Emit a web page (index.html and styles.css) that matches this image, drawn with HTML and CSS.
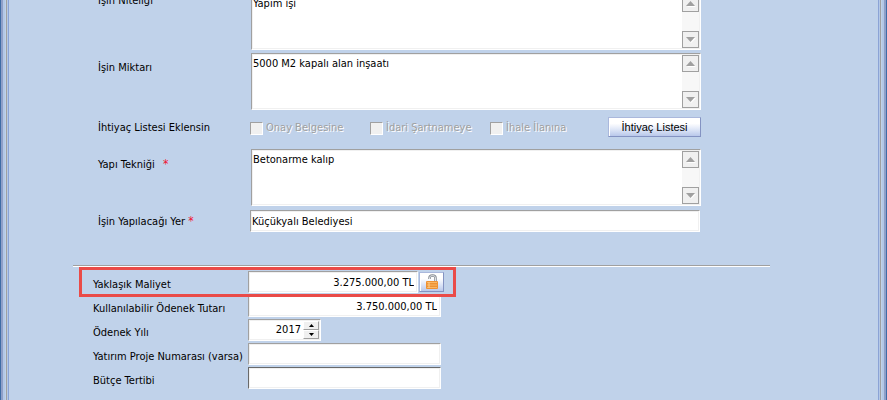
FILE: index.html
```html
<!DOCTYPE html>
<html lang="tr">
<head>
    <meta charset="UTF-8">
    <meta name="viewport" content="width=device-width, initial-scale=1.0">
    <title>Yaklaşık Maliyet</title>
    <link rel="stylesheet" href="styles.css">
</head>
<body>
    <form class="window">
        <div class="edge edge-left"></div>
        <main class="content">
            <section class="details">
                <div class="row row-memo">
                    <label class="label label-high" for="nitelik">İşin Niteliği</label>
                    <div class="memo">
                        <textarea id="nitelik" name="nitelik">Yapım işi</textarea>
                        <div class="scrollbar">
                            <button type="button" class="scroll-btn" aria-label="Yukarı"><svg width="10" height="6"><path d="M1 6L5 2L10 6Z" fill="#fff"/><path d="M0 5L4.500 0L9 5Z" fill="#a0a0a0"/></svg></button>
                            <button type="button" class="scroll-btn" aria-label="Aşağı"><svg width="10" height="6"><path d="M1 1H10L5 6Z" fill="#fff"/><path d="M0 0H9L4.500 5Z" fill="#a0a0a0"/></svg></button>
                        </div>
                    </div>
                </div>
                <div class="row row-memo">
                    <label class="label" for="miktar">İşin Miktarı</label>
                    <div class="memo">
                        <textarea id="miktar" name="miktar">5000 M2 kapalı alan inşaatı</textarea>
                        <div class="scrollbar">
                            <button type="button" class="scroll-btn" aria-label="Yukarı"><svg width="10" height="6"><path d="M1 6L5 2L10 6Z" fill="#fff"/><path d="M0 5L4.500 0L9 5Z" fill="#a0a0a0"/></svg></button>
                            <button type="button" class="scroll-btn" aria-label="Aşağı"><svg width="10" height="6"><path d="M1 1H10L5 6Z" fill="#fff"/><path d="M0 0H9L4.500 5Z" fill="#a0a0a0"/></svg></button>
                        </div>
                    </div>
                </div>
                <div class="row row-checks">
                    <span class="label">İhtiyaç Listesi Eklensin</span>
                    <div class="checks">
                        <label class="check"><input type="checkbox" name="onay" disabled>Onay Belgesine</label>
                        <label class="check"><input type="checkbox" name="idari" disabled>İdari Şartnameye</label>
                        <label class="check"><input type="checkbox" name="ihale" disabled>İhale İlanına</label>
                        <button type="button" class="btn btn-list">İhtiyaç Listesi</button>
                    </div>
                </div>
                <div class="row row-memo">
                    <label class="label" for="teknik">Yapı Tekniği <span class="required required-far">*</span></label>
                    <div class="memo">
                        <textarea id="teknik" name="teknik">Betonarme kalıp</textarea>
                        <div class="scrollbar">
                            <button type="button" class="scroll-btn" aria-label="Yukarı"><svg width="10" height="6"><path d="M1 6L5 2L10 6Z" fill="#fff"/><path d="M0 5L4.500 0L9 5Z" fill="#a0a0a0"/></svg></button>
                            <button type="button" class="scroll-btn" aria-label="Aşağı"><svg width="10" height="6"><path d="M1 1H10L5 6Z" fill="#fff"/><path d="M0 0H9L4.500 5Z" fill="#a0a0a0"/></svg></button>
                        </div>
                    </div>
                </div>
                <div class="row row-place">
                    <label class="label" for="yer">İşin Yapılacağı Yer <span class="required">*</span></label>
                    <input class="field" type="text" id="yer" name="yer" value="Küçükyalı Belediyesi">
                </div>
            </section>

            <hr class="divider">

            <section class="budget">
                <div class="line line-marked">
                    <label class="label" for="maliyet">Yaklaşık Maliyet</label>
                    <input class="field field-cost" type="text" id="maliyet" name="maliyet" value="3.275.000,00 TL">
                    <button type="button" class="btn btn-lock" aria-label="Kilidi aç">
                        <svg width="14" height="16" viewBox="0 0 14 16">
                            <path d="M4.500 5V4Q4.500 1.500 7.500 1.500Q10.500 1.500 10.500 4V8" fill="none" stroke="#858a92" stroke-width="2.500"/>
                            <path d="M4.500 5V4Q4.500 1.500 7.500 1.500Q10.500 1.500 10.500 4V8" fill="none" stroke="#e0e3e6" stroke-width="1"/>
                            <rect x="1" y="7" width="12" height="8" rx="1" fill="#ee9233"/>
                            <path d="M2 8.500H12M2 11H12M2 13.500H12" stroke="#f9b765"/>
                            <path d="M4 8V14" stroke="#fccf90"/>
                        </svg>
                    </button>
                </div>
                <div class="line">
                    <label class="label" for="odenek">Kullanılabilir Ödenek Tutarı</label>
                    <input class="field field-amount" type="text" id="odenek" name="odenek" value="3.750.000,00 TL">
                </div>
                <div class="line">
                    <label class="label" for="yil">Ödenek Yılı</label>
                    <div class="spinner">
                        <input type="text" id="yil" name="yil" value="2017">
                        <div class="spin-buttons">
                            <button type="button" aria-label="Artır"><svg width="5" height="3"><path d="M0 3L2.500 0L5 3Z"/></svg></button>
                            <button type="button" aria-label="Azalt"><svg width="5" height="3"><path d="M0 0H5L2.500 3Z"/></svg></button>
                        </div>
                    </div>
                </div>
                <div class="line">
                    <label class="label" for="proje">Yatırım Proje Numarası (varsa)</label>
                    <input class="field" type="text" id="proje" name="proje">
                </div>
                <div class="line">
                    <label class="label" for="butce">Bütçe Tertibi</label>
                    <input class="field field-active" type="text" id="butce" name="butce">
                </div>
            </section>
        </main>
        <div class="edge edge-right"></div>
    </form>
</body>
</html>
```
FILE: styles.css
```css
* {
    box-sizing: border-box;
}
body {
    margin: 0;
    background: #c0d2ea;
    color: #000;
    font-family: Tahoma, "DejaVu Sans Condensed", sans-serif;
    font-size: 11px;
    line-height: 14px;
    overflow: hidden;
}
input, textarea, button {
    font: inherit;
    color: inherit;
    margin: 0;
}
.window {
    display: flex;
    min-height: 100vh;
}
.edge {
    flex: none;
    width: 9px;
}
.edge-left {
    background: linear-gradient(90deg, #3f6ca6 1px, #8f9fc8 1px 3px, #b4c8e6 3px 5px, #c0d2ea 5px 6px, #a0a0a0 6px 7px, #b4c8e6 7px 8px, #8ba3d6 8px);
}
.edge-right {
    background: linear-gradient(270deg, #3f6ca6 1px, #8f9fc8 1px 3px, #b4c8e6 3px 5px, #c0d2ea 5px 6px, #a0a0a0 6px 7px, #b4c8e6 7px 8px, #8ba3d6 8px);
}
.content {
    flex: 1;
    min-width: 0;
    padding: 0 108px 11px 64px;
}

/* upper part is scrolled a few pixels out of view */
.details {
    margin-top: -7px;
    padding-left: 25px;
}
.row {
    display: flex;
    max-width: 603px;
}
.label {
    white-space: nowrap;
}
.row .label {
    flex: none;
    width: 152px;
}
.row-memo {
    margin-bottom: 3px;
}
.row-memo .label {
    width: 153px;
    padding-top: 8px;
}
.row-memo .label-high {
    padding-top: 1px;
}
.required {
    color: #f01030;
    font-size: 12px;
}
.required-far {
    margin-left: 5px;
}
.memo, .field, .spinner {
    border: 1px solid;
    border-color: #a0a0a0 #fff #fff #a0a0a0;
    background: #fff;
    box-shadow: inset -1px -1px #f0f0f0, inset 1px 1px #f0f0f0;
}
.memo {
    display: flex;
    flex: 1;
    height: 57px;
    padding: 1px;
}
.memo textarea {
    flex: 1;
    min-width: 0;
    padding: 2px 0;
    border: 0;
    background: none;
    resize: none;
    overflow: hidden;
    outline: none;
}
.scrollbar {
    display: flex;
    flex-direction: column;
    justify-content: space-between;
    width: 17px;
    background: #f7f7f7;
}
.scroll-btn {
    display: flex;
    align-items: center;
    justify-content: center;
    height: 17px;
    padding: 0;
    border: 1px solid #a0a0a0;
    background: #f0f0f0;
}
.row-checks {
    align-items: center;
    height: 20px;
    margin: 7px 0 12px;
}
.row-checks .label {
    padding-top: 2px;
}
.checks {
    display: flex;
    flex: 1;
    align-items: center;
}
.check {
    display: flex;
    flex: none;
    align-items: center;
    gap: 3px;
    width: 120px;
    padding-top: 2px;
    color: #a0a0a0;
    text-shadow: 1px 1px #fff;
}
.check:nth-child(3) {
    width: auto;
}
.check input {
    appearance: none;
    width: 13px;
    height: 13px;
    border: 1px solid;
    border-color: #a0a0a0 #fff #fff #a0a0a0;
    background: #f0f0f0;
}
.btn {
    padding: 0;
    border: 1px solid;
    border-color: #aab8dc #8493c2 #8493c2 #aab8dc;
    background: linear-gradient(#fff 30%, #e2e9f8 60%, #b9c8ea);
    box-shadow: inset 1px 1px #fff;
}
.btn-list {
    width: 93px;
    height: 20px;
    margin-left: auto;
    font-family: "Liberation Sans", Arial, sans-serif;
}
.row-place {
    align-items: center;
    margin-top: 4px;
    padding-right: 1px;
}
.field {
    flex: 1;
    min-width: 0;
    height: 22px;
    padding: 0 1px;
    outline: none;
}
.divider {
    margin: 33px 0 4px;
    border: 0;
    border-top: 1px solid #a0a0a0;
    border-bottom: 1px solid #fff;
}

.budget {
    display: flex;
    flex-direction: column;
    gap: 2px;
    max-width: 368px;
    padding-left: 20px;
}
.line {
    display: flex;
    height: 22px;
}
.line .label {
    flex: none;
    width: 155px;
    padding-top: 7px;
}
/* red frame around the cost line, drawn over its neighbours */
.line-marked {
    position: relative;
}
.line-marked::after {
    content: "";
    position: absolute;
    inset: -4px -15px -4px -14px;
    border: 3px solid #ea4b48;
    pointer-events: none;
}
.field-cost, .field-amount, .spinner input {
    text-align: right;
}
.field-cost, .field-amount {
    padding-right: 3px;
}
.line-marked .field-cost {
    flex: none;
    width: 170px;
}
.btn-lock {
    display: flex;
    flex: none;
    align-items: center;
    justify-content: center;
    width: 25px;
    height: 20px;
    margin: 1px 0 0 1px;
}
.spinner {
    display: flex;
    width: 73px;
    padding: 1px;
}
.spinner input {
    flex: 1;
    min-width: 0;
    padding: 0 2px 0 0;
    border: 0;
    background: none;
    outline: none;
}
.spin-buttons {
    display: flex;
    flex-direction: column;
    width: 16px;
}
.spin-buttons button {
    display: flex;
    flex: 1;
    align-items: center;
    justify-content: center;
    padding: 0;
    border: 1px solid;
    border-color: #fff #a0a0a0 #a0a0a0 #fff;
    background: #f0f0f0;
}
.field-active {
    border-color: #696969 #fff #fff #696969;
}
```
